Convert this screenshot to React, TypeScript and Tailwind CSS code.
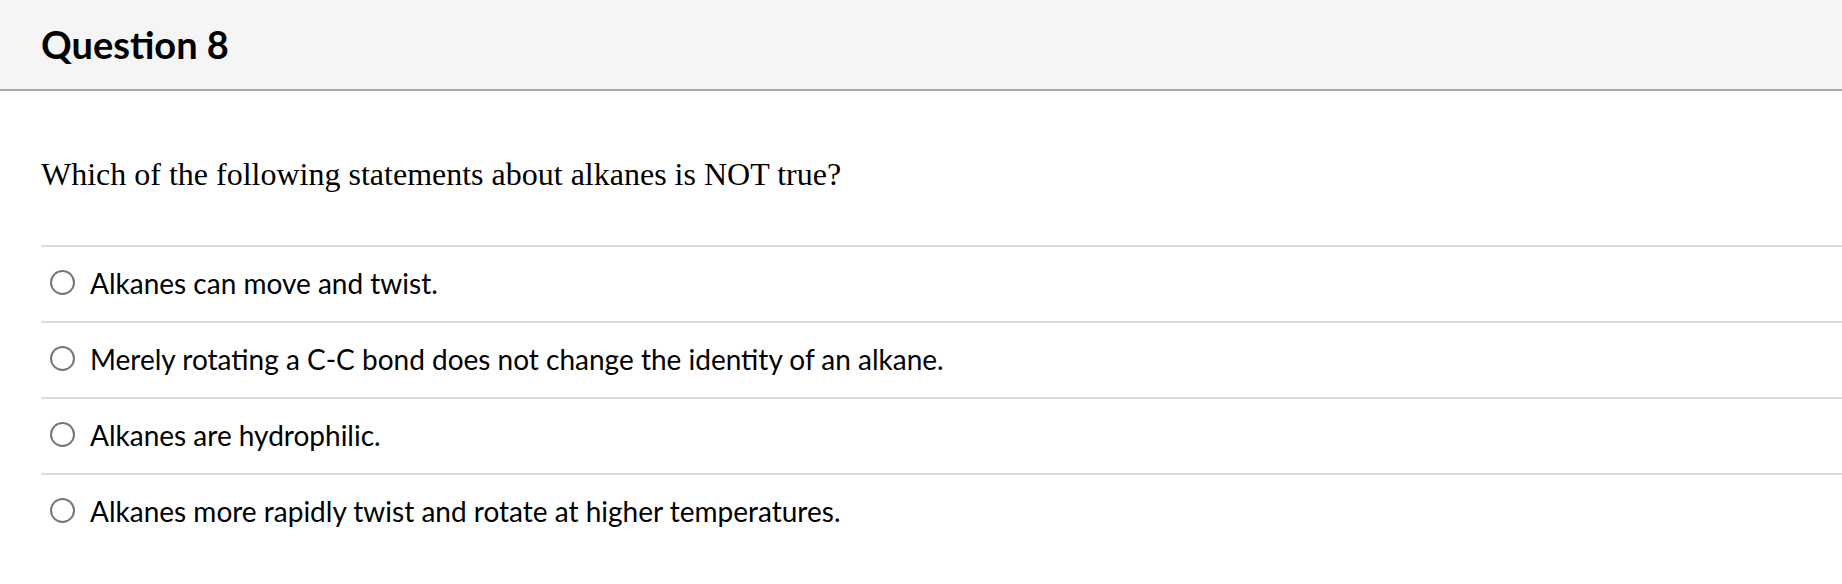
import React from 'react';

const options = [
  'Alkanes can move and twist.',
  'Merely rotating a C-C bond does not change the identity of an alkane.',
  'Alkanes are hydrophilic.',
  'Alkanes more rapidly twist and rotate at higher temperatures.',
];

const App: React.FC = () => {
  return (
    <div className="min-h-screen w-full bg-white text-black">
      <div className="flex h-[91px] items-center border-b-2 border-[#aaaaaa] bg-[#f5f5f5] pb-[2px] pl-[41px]">
        <h2 className="font-['Lato',sans-serif] text-[38px] font-bold leading-none">Question 8</h2>
      </div>

      <div className="pl-[41px]">
        <p className="mt-[64px] font-['Liberation_Serif',serif] text-[32px] leading-[38px]">
          Which of the following statements about alkanes is NOT true?
        </p>

        <div className="mt-[52px]">
          {options.map((text) => (
            <label
              key={text}
              className="flex h-[76px] items-center border-t-2 border-[#dddddd] pb-[3px] pl-[9px] font-['Lato',sans-serif] text-[28px]"
            >
              <span className="h-[25px] w-[25px] shrink-0 rounded-full border-2 border-[#767676] bg-white" />
              <span className="ml-[15px] leading-none">{text}</span>
            </label>
          ))}
        </div>
      </div>
    </div>
  );
};

export default App;
